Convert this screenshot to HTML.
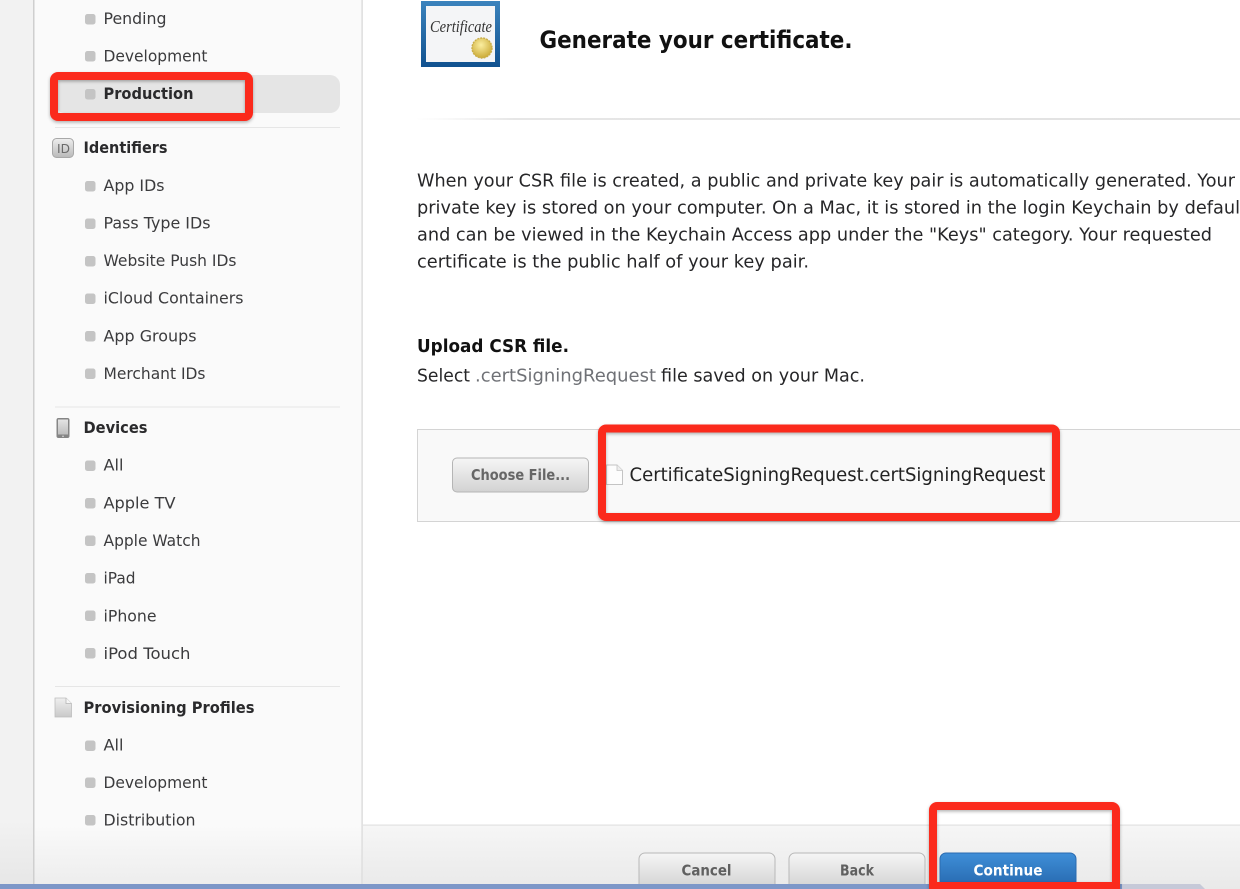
<!DOCTYPE html>
<html lang="en">
<head>
<meta charset="utf-8">
<title>Generate your certificate</title>
<style>
html,body{margin:0;padding:0;width:1240px;height:889px;overflow:hidden;background:#fff}
svg{display:block;filter:blur(.35px)}
text{font-family:"DejaVu Sans","Liberation Sans",sans-serif;font-size:16px;fill:#3b3b3d}
.b{font-weight:bold;fill:#2a2a2c}
.p{fill:#262628;font-size:18px}
</style>
</head>
<body>
<svg width="1240" height="889" viewBox="0 0 1240 889" xmlns="http://www.w3.org/2000/svg">
<defs>
<linearGradient id="foot" x1="0" y1="0" x2="0" y2="1"><stop offset="0" stop-color="#f6f6f6"/><stop offset="1" stop-color="#e9e9e9"/></linearGradient>
<linearGradient id="sideEnd" x1="0" y1="0" x2="0" y2="1"><stop offset="0" stop-color="#fafafa"/><stop offset="1" stop-color="#ececec"/></linearGradient>
<linearGradient id="leftEnd" x1="0" y1="0" x2="0" y2="1"><stop offset="0" stop-color="#f2f2f2"/><stop offset="1" stop-color="#e6e6e6"/></linearGradient>
<linearGradient id="hr" x1="0" y1="0" x2="1" y2="0"><stop offset="0" stop-color="#eee" stop-opacity="0"/><stop offset=".12" stop-color="#e6e6e6"/><stop offset="1" stop-color="#e2e2e2"/></linearGradient>
<linearGradient id="btn" x1="0" y1="0" x2="0" y2="1"><stop offset="0" stop-color="#f6f6f6"/><stop offset="1" stop-color="#d2d2d2"/></linearGradient>
<linearGradient id="blue" x1="0" y1="0" x2="0" y2="1"><stop offset="0" stop-color="#3f8fd8"/><stop offset="1" stop-color="#2566ac"/></linearGradient>
<linearGradient id="frame" x1="0" y1="0" x2="0" y2="1"><stop offset="0" stop-color="#3b83bd"/><stop offset="1" stop-color="#10518f"/></linearGradient>
<linearGradient id="idg" x1="0" y1="0" x2="0" y2="1"><stop offset="0" stop-color="#eeeeee"/><stop offset="1" stop-color="#b9b9b9"/></linearGradient>
<linearGradient id="docg" x1="0" y1="0" x2="0" y2="1"><stop offset="0" stop-color="#efefef"/><stop offset="1" stop-color="#c9c9c9"/></linearGradient>
<linearGradient id="screen" x1="0" y1="0" x2="0" y2="1"><stop offset="0" stop-color="#e4e4e4"/><stop offset="1" stop-color="#bdbdbd"/></linearGradient>
<radialGradient id="seal" cx=".45" cy=".35" r=".7"><stop offset="0" stop-color="#fbeea0"/><stop offset="1" stop-color="#c8a630"/></radialGradient>
<filter id="sh" x="-10%" y="-10%" width="120%" height="125%"><feDropShadow dx="0" dy="1.5" stdDeviation="1.5" flood-color="#000" flood-opacity=".3"/></filter>
<g id="dot"><rect x="0" y="0" width="10.500" height="10.500" rx="2.500" fill="#c4c4c4"/></g>
</defs>

<!-- backgrounds -->
<rect x="0" y="0" width="33" height="889" fill="#f2f2f2"/>
<rect x="0" y="820" width="33" height="69" fill="url(#leftEnd)"/>
<rect x="33" y="0" width="1.5" height="889" fill="#cfcfcf"/>
<rect x="34.500" y="0" width="327" height="889" fill="#fafafa"/>
<rect x="34.500" y="825" width="327" height="64" fill="url(#sideEnd)"/>
<rect x="361.500" y="0" width="1.200" height="889" fill="#d6d6d6"/>
<rect x="363" y="825" width="877" height="64" fill="url(#foot)"/>
<rect x="363" y="824.500" width="877" height="1.200" fill="#e2e2e2"/>

<!-- sidebar selection -->
<rect x="55" y="75" width="285" height="38" rx="10" fill="#e5e5e5"/>

<!-- separators -->
<rect x="55" y="127" width="285" height="1" fill="#e6e6e6"/>
<rect x="55" y="406.500" width="285" height="1" fill="#e6e6e6"/>
<rect x="55" y="686" width="285" height="1" fill="#e6e6e6"/>

<!-- bullets -->
<use href="#dot" x="85" y="14"/>
<use href="#dot" x="85" y="51"/>
<use href="#dot" x="85" y="89"/>
<use href="#dot" x="85" y="181"/>
<use href="#dot" x="85" y="218.500"/>
<use href="#dot" x="85" y="256"/>
<use href="#dot" x="85" y="293.500"/>
<use href="#dot" x="85" y="331"/>
<use href="#dot" x="85" y="368.500"/>
<use href="#dot" x="85" y="460.500"/>
<use href="#dot" x="85" y="498"/>
<use href="#dot" x="85" y="535.500"/>
<use href="#dot" x="85" y="573"/>
<use href="#dot" x="85" y="610.500"/>
<use href="#dot" x="85" y="648"/>
<use href="#dot" x="85" y="740.500"/>
<use href="#dot" x="85" y="777.500"/>
<use href="#dot" x="85" y="815"/>

<!-- sidebar text -->
<text x="103.500" y="24" textLength="63" lengthAdjust="spacingAndGlyphs">Pending</text>
<text x="103.500" y="61.500" textLength="104" lengthAdjust="spacingAndGlyphs">Development</text>
<text class="b" x="103.500" y="99" textLength="90" lengthAdjust="spacingAndGlyphs">Production</text>
<text class="b" x="83.500" y="153" textLength="84" lengthAdjust="spacingAndGlyphs">Identifiers</text>
<text x="103.500" y="191" textLength="61" lengthAdjust="spacingAndGlyphs">App IDs</text>
<text x="103.500" y="228.500" textLength="107" lengthAdjust="spacingAndGlyphs">Pass Type IDs</text>
<text x="103.500" y="266" textLength="133" lengthAdjust="spacingAndGlyphs">Website Push IDs</text>
<text x="103.500" y="303.500" textLength="140" lengthAdjust="spacingAndGlyphs">iCloud Containers</text>
<text x="103.500" y="341.500" textLength="93" lengthAdjust="spacingAndGlyphs">App Groups</text>
<text x="103.500" y="379" textLength="102" lengthAdjust="spacingAndGlyphs">Merchant IDs</text>
<text class="b" x="83.500" y="433" textLength="64" lengthAdjust="spacingAndGlyphs">Devices</text>
<text x="103.500" y="470.500" textLength="20" lengthAdjust="spacingAndGlyphs">All</text>
<text x="103.500" y="508.500" textLength="72" lengthAdjust="spacingAndGlyphs">Apple TV</text>
<text x="103.500" y="546" textLength="97" lengthAdjust="spacingAndGlyphs">Apple Watch</text>
<text x="103.500" y="583.500" textLength="32" lengthAdjust="spacingAndGlyphs">iPad</text>
<text x="103.500" y="621.500" textLength="53" lengthAdjust="spacingAndGlyphs">iPhone</text>
<text x="103.500" y="659" textLength="87" lengthAdjust="spacingAndGlyphs">iPod Touch</text>
<text class="b" x="83.500" y="713" textLength="171" lengthAdjust="spacingAndGlyphs">Provisioning Profiles</text>
<text x="103.500" y="750.500" textLength="20" lengthAdjust="spacingAndGlyphs">All</text>
<text x="103.500" y="788" textLength="104" lengthAdjust="spacingAndGlyphs">Development</text>
<text x="103.500" y="825.500" textLength="92" lengthAdjust="spacingAndGlyphs">Distribution</text>

<!-- ID icon -->
<rect x="52.500" y="138.500" width="21" height="19" rx="4" fill="url(#idg)" stroke="#a8a8a8"/>
<text x="57" y="153" textLength="13" lengthAdjust="spacingAndGlyphs" style="font-size:12px;fill:#6a6a6a">ID</text>
<!-- device icon -->
<rect x="56.500" y="418" width="13" height="20" rx="2" fill="#858585"/>
<rect x="58" y="419.500" width="10" height="15" fill="url(#screen)"/>
<circle cx="63" cy="436.300" r=".8" fill="#ddd"/>
<!-- profile doc icon -->
<path d="M55 698H66L71.500 703.500V717H55Z" fill="url(#docg)" stroke="#bdbdbd" stroke-width=".8"/>
<path d="M66 698V703.500H71.500" fill="#f6f6f6" stroke="#b5b5b5" stroke-width=".8"/>

<!-- certificate icon -->
<rect x="421" y="1" width="79" height="66" fill="url(#frame)"/>
<rect x="426" y="6" width="69" height="56" fill="#f4f5f7"/>
<text x="430" y="32" textLength="62" lengthAdjust="spacingAndGlyphs" style="font-family:'Liberation Serif',serif;font-style:italic;font-size:17px;fill:#333">Certificate</text>
<circle cx="482" cy="48" r="10" fill="url(#seal)" stroke="#c9ad4a" stroke-width="1.400" stroke-dasharray="2 1"/>

<!-- heading -->
<text x="539.500" y="48" textLength="313" lengthAdjust="spacingAndGlyphs" style="font-size:24px;font-weight:bold;fill:#111">Generate your certificate.</text>
<rect x="415" y="118" width="825" height="2" fill="url(#hr)"/>

<!-- body -->
<text class="p" x="417" y="186.500" textLength="818" lengthAdjust="spacingAndGlyphs">When your CSR file is created, a public and private key pair is automatically generated. Your</text>
<text class="p" x="417" y="213.500" textLength="830" lengthAdjust="spacingAndGlyphs">private key is stored on your computer. On a Mac, it is stored in the login Keychain by default</text>
<text class="p" x="417" y="240.500" textLength="795" lengthAdjust="spacingAndGlyphs">and can be viewed in the Keychain Access app under the "Keys" category. Your requested</text>
<text class="p" x="417" y="267.500" textLength="392" lengthAdjust="spacingAndGlyphs">certificate is the public half of your key pair.</text>

<text class="b" x="417" y="352" textLength="152" lengthAdjust="spacingAndGlyphs" style="font-size:18px;fill:#111">Upload CSR file.</text>
<text class="p" x="417" y="381.500" textLength="53" lengthAdjust="spacingAndGlyphs">Select</text>
<text class="p" x="475" y="381.500" textLength="181" lengthAdjust="spacingAndGlyphs" style="fill:#6f7176">.certSigningRequest</text>
<text class="p" x="661" y="381.500" textLength="204" lengthAdjust="spacingAndGlyphs">file saved on your Mac.</text>

<!-- file box -->
<rect x="417.500" y="429.500" width="830" height="92" fill="#f9f9f9" stroke="#d4d4d4"/>
<rect x="452.500" y="458" width="136" height="34" rx="4.500" fill="url(#btn)" stroke="#b5b5b5"/>
<text x="471" y="480" textLength="99" lengthAdjust="spacingAndGlyphs" style="font-size:15px;font-weight:bold;fill:#666">Choose File...</text>
<path d="M606.500 465H617L622.500 470.500V484.500H606.500Z" fill="#fdfdfd" stroke="#c4c4c4"/>
<path d="M617 465V470.500H622.500" fill="#eee" stroke="#c4c4c4" stroke-width=".8"/>
<text x="629.500" y="481" textLength="416" lengthAdjust="spacingAndGlyphs" style="font-size:19px;fill:#222">CertificateSigningRequest.certSigningRequest</text>

<!-- footer buttons -->
<path d="M639 889V859a6 6 0 0 1 6-6H769a6 6 0 0 1 6 6V889Z" fill="url(#btn)" stroke="#b8b8b8"/>
<path d="M789 889V859a6 6 0 0 1 6-6H919a6 6 0 0 1 6 6V889Z" fill="url(#btn)" stroke="#b8b8b8"/>
<path d="M940 889V859a6 6 0 0 1 6-6H1070a6 6 0 0 1 6 6V889Z" fill="url(#blue)" stroke="#2a6bb0"/>
<text x="681.500" y="875.500" textLength="50" lengthAdjust="spacingAndGlyphs" style="font-size:15px;font-weight:bold;fill:#606060">Cancel</text>
<text x="840" y="875.500" textLength="34" lengthAdjust="spacingAndGlyphs" style="font-size:15px;font-weight:bold;fill:#606060">Back</text>
<text x="973.500" y="875.500" textLength="69" lengthAdjust="spacingAndGlyphs" style="font-size:15px;font-weight:bold;fill:#fff">Continue</text>

<!-- bottom strip -->
<rect x="0" y="884" width="1122" height="5" fill="#7d97c8"/>
<path d="M1122 884H1200L1205 889H1122Z" fill="#c6c9d8"/>

<!-- red annotation boxes -->
<g fill="none" stroke="#fb2c1f" stroke-width="8" filter="url(#sh)">
<rect x="54" y="76" width="195" height="41" rx="4"/>
<rect x="602" y="428.500" width="454" height="88.500" rx="4"/>
<path d="M933 889V810a4 4 0 0 1 4-4H1112a4 4 0 0 1 4 4V889"/>
<path d="M933 886H1116"/>
</g>
</svg>
</body>
</html>
